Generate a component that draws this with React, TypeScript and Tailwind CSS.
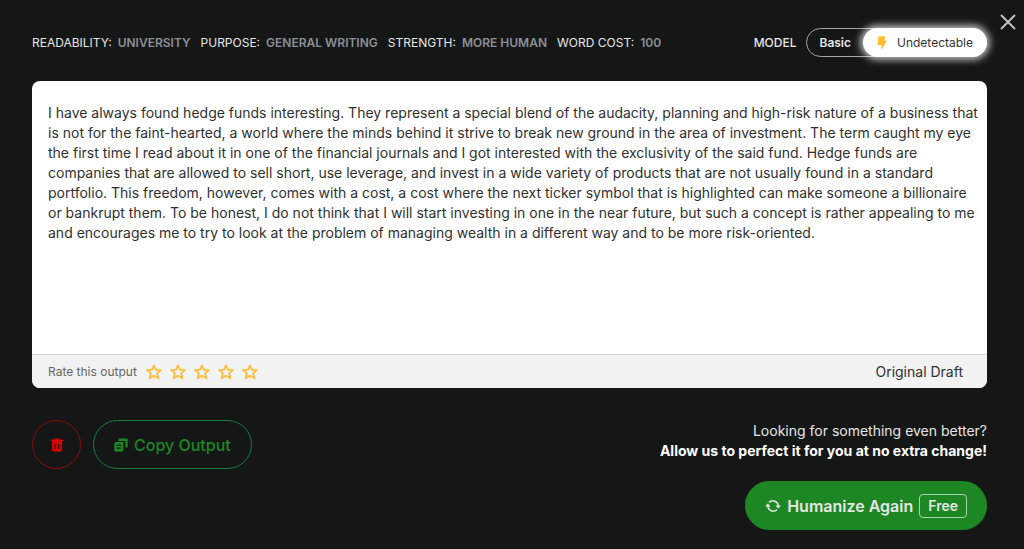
import { useState } from "react";

const details = [
  { label: "READABILITY:", value: "UNIVERSITY" },
  { label: "PURPOSE:", value: "GENERAL WRITING" },
  { label: "STRENGTH:", value: "MORE HUMAN" },
  { label: "WORD COST:", value: "100" },
];

const output =
  "I have always found hedge funds interesting. They represent a special blend of the audacity, planning and high-risk nature of a business that is not for the faint-hearted, a world where the minds behind it strive to break new ground in the area of investment. The term caught my eye the first time I read about it in one of the financial journals and I got interested with the exclusivity of the said fund. Hedge funds are companies that are allowed to sell short, use leverage, and invest in a wide variety of products that are not usually found in a standard portfolio. This freedom, however, comes with a cost, a cost where the next ticker symbol that is highlighted can make someone a billionaire or bankrupt them. To be honest, I do not think that I will start investing in one in the near future, but such a concept is rather appealing to me and encourages me to try to look at the problem of managing wealth in a different way and to be more risk-oriented.";

function CloseIcon() {
  return (
    <svg viewBox="0 0 16 16" className="size-4" fill="none" stroke="currentColor" strokeWidth="1.8" strokeLinecap="round">
      <path d="M1.5 1.5l13 13M14.5 1.5l-13 13" />
    </svg>
  );
}

function BoltIcon() {
  return (
    <svg viewBox="0 0 10 14" className="h-3.5 w-2.5" fill="#fdbf2d">
      <path d="M1.500.3h6.500L7.600 4.800h2.300L4.600 13.900V9H.4z" />
    </svg>
  );
}

function StarIcon() {
  return (
    <svg viewBox="0 0 16 16" className="size-4" fill="none" stroke="#fbbc34" strokeWidth="1.7" strokeLinejoin="round">
      <path d="M8 1.300l1.900 4.300 4.900.500-3.700 3.200 1.200 5L8 11.800 3.700 14.300l1.200-5L1.200 6.100l4.900-.5z" />
    </svg>
  );
}

function TrashIcon() {
  return (
    <svg viewBox="0 0 12 14" className="h-3.5 w-3" fill="#d90000" fillRule="evenodd">
      <path d="M4 .5h4l.7 1H12V3H0V1.500h3.300zM1 3h10v9.500c0 .6-.4 1-1 1H2c-.6 0-1-.4-1-1zM3.600 5.800v5.200h1.300V5.800zM7.100 5.800v5.200h1.300V5.800z" />
    </svg>
  );
}

function CopyIcon() {
  return (
    <svg viewBox="0 0 14 14" className="size-3.5" fill="#1d8724" fillRule="evenodd">
      <path d="M4.500.5H13c.4 0 .7.300.7.700v8.300h-2.300V3H4.500z" />
      <path d="M1.800 4H9.300v8.500c0 .5-.4.900-.9.900H1.300a.9.900 0 0 1-.9-.9V5.400zM2.600 6.800v1.200h4.500v-1.200zM2.600 9.600v1.200h4.500v-1.200z" />
    </svg>
  );
}

function RefreshIcon() {
  return (
    <svg viewBox="0 0 16 16" className="size-4" fill="none" stroke="currentColor" strokeWidth="1.500">
      <path d="M4 4.600A5.300 5.300 0 0 1 13.200 8M12 11.400A5.300 5.300 0 0 1 2.800 8" />
      <path d="M10.400 7.500H16L13.200 10.400zM0 8.500h5.600L2.800 5.600z" fill="currentColor" stroke="none" />
    </svg>
  );
}

export default function App() {
  const [rating, setRating] = useState(0);

  return (
    <main className="relative min-h-screen bg-[#151716] px-8 pt-7 pb-4 font-['Inter','Liberation_Sans',sans-serif] text-[#e6e6e6]">
      <button aria-label="Close" className="absolute top-3.5 right-2 text-[#c4c4c4]">
        <CloseIcon />
      </button>

      <div className="mr-[5px]">
        <header className="flex items-center justify-between">
          <dl className="flex gap-2.5 pt-px text-xs leading-5">
            {details.map((item) => (
              <div key={item.label} className="flex gap-1.5">
                <dt>{item.label}</dt>
                <dd className="font-semibold text-[#8b8f98]">{item.value}</dd>
              </div>
            ))}
          </dl>
          <div className="flex items-center gap-2.5 text-xs">
            <span className="font-medium">MODEL</span>
            <div className="flex h-[29px] items-center rounded-full border border-[#a5a5a5]">
              <button className="px-3 font-semibold">Basic</button>
              <button className="-mr-px flex h-[29px] items-center gap-2.5 rounded-full bg-white px-3.5 text-[#333] shadow-[0_0_7px_3px_rgba(255,255,255,0.7)]">
                <BoltIcon />
                Undetectable
              </button>
            </div>
          </div>
        </header>

        <section className="mt-6 flex flex-col overflow-hidden rounded-lg bg-white text-[#2f3131]">
          <p className="min-h-[273px] pt-[22px] pr-2 pl-4 text-sm leading-5">{output}</p>
          <footer className="flex min-h-[34px] items-center justify-between border-t border-[#d4d4d4] bg-[#f2f2f2] pr-6 pl-4">
            <div className="flex items-center gap-[9px]">
              <span className="text-xs text-[#666]">Rate this output</span>
              <div className="flex gap-2">
                {[1, 2, 3, 4, 5].map((n) => (
                  <button key={n} aria-label={`Rate ${n}`} aria-pressed={rating === n} onClick={() => setRating(n)}>
                    <StarIcon />
                  </button>
                ))}
              </div>
            </div>
            <button className="text-sm">Original Draft</button>
          </footer>
        </section>

        <div className="mt-8 flex items-start justify-between">
          <div className="flex gap-3">
            <button aria-label="Delete" className="flex size-[49px] items-center justify-center rounded-full border border-[#900b0b]">
              <TrashIcon />
            </button>
            <button className="flex h-[49px] items-center gap-1.5 rounded-full border border-[#1c7a43] px-5 text-base font-medium text-[#1d8724]">
              <CopyIcon />
              Copy Output
            </button>
          </div>
          <div className="flex flex-col items-end pt-px text-right">
            <p className="text-sm leading-5">Looking for something even better?</p>
            <p className="text-sm leading-5 font-bold text-white">Allow us to perfect it for you at no extra change!</p>
            <button className="mt-5 flex h-[49px] items-center gap-1.5 rounded-full bg-[#1d8724] px-5 text-base font-semibold">
              <RefreshIcon />
              Humanize Again
              <span className="rounded border border-[#a9d3ab] px-2 text-sm leading-[22px]">Free</span>
            </button>
          </div>
        </div>
      </div>
    </main>
  );
}
